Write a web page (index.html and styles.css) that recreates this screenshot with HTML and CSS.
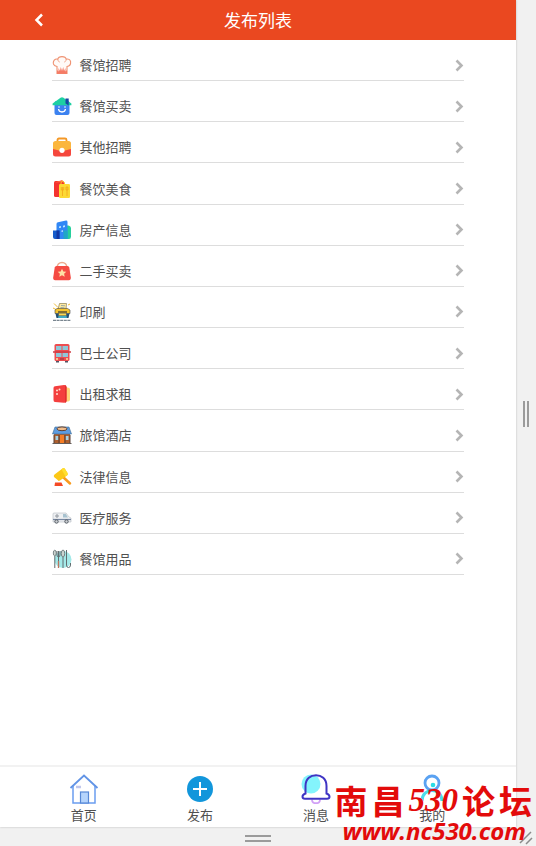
FILE: index.html
```html
<!DOCTYPE html>
<html lang="zh-CN">
<head>
<meta charset="utf-8">
<meta name="viewport" content="width=device-width, initial-scale=1">
<title>发布列表</title>
<link rel="stylesheet" href="styles.css">
</head>
<body>
<div class="stage">
  <div class="phone">
    <header class="topbar">
      <button class="back" type="button" aria-label="返回"><svg width="10" height="14" viewBox="0 0 10 14"><path d="M8 1.500 2.500 7 8 12.500" fill="none" stroke="#fff" stroke-width="2.500"/></svg></button>
      <h1>发布列表</h1>
    </header>
    <main class="content">
      <ul class="list">
        <li><a href="#"><svg class="icon" viewBox="0 0 20 20"><path d="M5 18.500V11.500C1.500 11 .8 8.500 1.500 6.500 2.300 4.300 4.300 3.600 5.800 4.200 6.500.8 13.500.8 14.200 4.200c2-.8 4 .5 4.400 2.500.3 2.600-1.200 4.400-3.600 4.800v7z" fill="#fffaf7" stroke="#ef9272" stroke-width="1.100"/><path d="M5.800 4.500c.2 1.500 1 2.500 2 2.500M14.200 4.500c-.2 1.500-1 2.500-2 2.500" fill="none" stroke="#ef9272" stroke-width=".8"/><path d="M5 18.700V15l1.500 1.500V13L8 16l.8-4 1.200 4 1.200-4 .8 4 1.500-3v3.500L15 15v3.700z" fill="#f57b66"/></svg><span>餐馆招聘</span><svg class="arrow" viewBox="0 0 9 13"><path d="M1.500 1.500 6.500 6.500l-5 5"/></svg></a></li>
        <li><a href="#"><svg class="icon" viewBox="0 0 20 20"><rect x="2.500" y="5" width="15" height="14" rx="2" fill="#3c82f0"/><path d="M.6 7.500 8.500 1.700q1.500-1 3 0l7.900 5.800v1.700H.6z" fill="#1dd0a2"/><path d="M13.500 2.500h3.200V9.500l-3.200-2z" fill="#1747a5"/><path d="M6.500 13c.5 4 6.500 4 7 0" fill="none" stroke="#fff" stroke-width="1.300"/><circle cx="7" cy="11" r=".8" fill="#fff"/><circle cx="13" cy="11" r=".8" fill="#fff"/></svg><span>餐馆买卖</span><svg class="arrow" viewBox="0 0 9 13"><path d="M1.500 1.500 6.500 6.500l-5 5"/></svg></a></li>
        <li><a href="#"><svg class="icon" viewBox="0 0 20 20"><path d="M5.500 6V3q0-1.500 1.500-1.500h6q1.500 0 1.500 1.500v3" fill="none" stroke="#f49826" stroke-width="1.800"/><rect x="1" y="5" width="18" height="14.500" rx="2.500" fill="#f5473d"/><path d="M1 12V6.500q0-2.500 2.500-2.500h13q2.500 0 2.500 2.500V12l-6 1.500H7z" fill="#fbb63d"/><circle cx="10" cy="13.300" r="2.600" fill="#fff"/></svg><span>其他招聘</span><svg class="arrow" viewBox="0 0 9 13"><path d="M1.500 1.500 6.500 6.500l-5 5"/></svg></a></li>
        <li><a href="#"><svg class="icon" viewBox="0 0 20 20"><rect x="2" y="2" width="10" height="16" rx="1.500" fill="#f4332f"/><path d="M3 3.500 10 1l2 2" fill="#ff7142"/><rect x="7" y="5" width="11" height="14" rx="1.200" fill="#fcd934"/><path d="M9 5V3.500q1.500-2.500 3.500 0V5" fill="none" stroke="#fcc425"/><path d="M10.500 8v9M9.300 8v3h2.400V8M15 8v9m-1-9h2v3h-2z" fill="none" stroke="#f2a719" stroke-width=".8"/></svg><span>餐饮美食</span><svg class="arrow" viewBox="0 0 9 13"><path d="M1.500 1.500 6.500 6.500l-5 5"/></svg></a></li>
        <li><a href="#"><svg class="icon" viewBox="0 0 20 20"><path d="M11 5.500h5.500Q19 6 19 8v8.500q0 2.500-2 2.500h-6z" fill="#26cf9c"/><path d="M4.500 4q0-1.500 1.500-1.800l8-1.600Q15.500.5 15.500 2v17h-11z" fill="#3187f5"/><path d="M1 10.500h6.500V19h-4.500q-2 0-2-2z" fill="#165dcb"/><path d="M4.500 10.500h3V19h-3z" fill="#1238a4"/><path d="M11.500 10.500h4V19h-4z" fill="#20a7c5"/><path d="M7 6.500 9 6v1.700l-2 .4zM11 5.700l2-.4V7l-2 .4zM9.500 10.500l1.500-.3v1.500l-1.500.3z" fill="#bfe5ff"/></svg><span>房产信息</span><svg class="arrow" viewBox="0 0 9 13"><path d="M1.500 1.500 6.500 6.500l-5 5"/></svg></a></li>
        <li><a href="#"><svg class="icon" viewBox="0 0 20 20"><path d="M5 7c0-7.500 10-7.500 10 0" fill="none" stroke="#edaa8d" stroke-width="1.500"/><path d="M4.500 5h11q1.500 0 1.800 1.500l1.500 10q.2 2.800-2 2.800H3.200Q1 19.300 1.200 16.500l1.500-10Q3 5 4.500 5z" fill="#f54b43"/><path d="m10 7.700 1.300 2.700 3 .4-2.200 2 .6 3-2.700-1.500-2.700 1.500.6-3-2.200-2 3-.4z" fill="#ffe0a5"/></svg><span>二手买卖</span><svg class="arrow" viewBox="0 0 9 13"><path d="M1.500 1.500 6.500 6.500l-5 5"/></svg></a></li>
        <li><a href="#"><svg class="icon" viewBox="0 0 20 20"><path d="m2 1.500 4 4M1 6l3 1.500M16 3l2-1" stroke="#f0bd37"/><path d="M7.500 1.500h7l-.5 6H6z" fill="#ffe9a0" stroke="#8b8050" stroke-width=".7"/><path d="m9 3.500 4 .3M8.500 5.500l4 .3" stroke="#6f91a5" stroke-width=".7"/><path d="m3 8 2-1.500h10.500L18 8v3.500H3z" fill="#f6c52f" stroke="#444" stroke-width=".6"/><path d="M3.500 11.500h14l-1 4.500h-12z" fill="#254f70"/><path d="M6 10h9" stroke="#333" stroke-width="1.200"/><path d="M7 11.500h7l.5 2h-8z" fill="#ffd84d"/><path d="M6.500 14h8l.5 2H6z" fill="#41a9c2"/><path d="M1 18.300h18" stroke="#596875" stroke-dasharray="3 .6"/></svg><span>印刷</span><svg class="arrow" viewBox="0 0 9 13"><path d="M1.500 1.500 6.500 6.500l-5 5"/></svg></a></li>
        <li><a href="#"><svg class="icon" viewBox="0 0 20 20"><path d="M4 17h3v2.500H4zm9 0h3v2.500h-3z" fill="#515363"/><rect x="2.500" y="1" width="15" height="17" rx="1.500" fill="#ed4d50"/><path d="M1 9h18" stroke="#ce3d43" stroke-width="1.500"/><path d="M4 3h5.500v4H4zm6.500 0H16v4h-5.500zM4 10h5.500v4H4zm6.500 0H16v4h-5.500z" fill="#8fc7d8"/><path d="M4 16h2m8 0h2" stroke="#ffe39b" stroke-width="1.500"/><path d="M8 16h4" stroke="#863a44"/></svg><span>巴士公司</span><svg class="arrow" viewBox="0 0 9 13"><path d="M1.500 1.500 6.500 6.500l-5 5"/></svg></a></li>
        <li><a href="#"><svg class="icon" viewBox="0 0 20 20"><path d="M12 3.500h3.500q2.500 0 2.500 2v10q0 2-2 2h-4z" fill="#ffd579"/><path d="M1.500 4q0-1.500 1.500-1.700l9-1.200q2.500-.2 2.500 2V17q0 2-2.500 1.800L3 18q-1.500-.2-1.500-2z" fill="#f43f3e"/><path d="M13 1.200q1.500.2 1.500 2V17q0 1.600-1.500 1.800z" fill="#df302f"/><circle cx="5" cy="6.500" r="1" fill="#ffe3d0"/><circle cx="7.500" cy="5.500" r="1" fill="#ffe3d0"/><circle cx="5" cy="10" r="1" fill="#ffe3d0"/></svg><span>出租求租</span><svg class="arrow" viewBox="0 0 9 13"><path d="M1.500 1.500 6.500 6.500l-5 5"/></svg></a></li>
        <li><a href="#"><svg class="icon" viewBox="0 0 20 20"><path d="M2 8h16v10H2z" fill="#ad602f"/><path d="M3 2h14l2.500 7H.5z" fill="#5d9ce0" stroke="#416b91" stroke-width=".6"/><ellipse cx="10" cy="3.800" rx="5" ry="1.900" fill="#f0bd8c" stroke="#5d4033"/><path d="M3.500 11h3v4h-3zm10 0h3v4h-3z" fill="#a7d2e3"/><path d="M8 10h4v8H8z" fill="#f57d25"/><path d="M7 10v8m6-8v8M2 10v8m16-8v8" stroke="#583d32"/><path d="M.5 18.500h19" stroke="#655d59"/></svg><span>旅馆酒店</span><svg class="arrow" viewBox="0 0 9 13"><path d="M1.500 1.500 6.500 6.500l-5 5"/></svg></a></li>
        <li><a href="#"><svg class="icon" viewBox="0 0 20 20"><path d="m11 10 7 6.500" stroke="#f99b1e" stroke-width="2.500" stroke-linecap="round"/><path d="m2.500 7.500 8-6q1.500-1 2.500.5l2.500 4q.7 1.500-.5 2.500l-7 5q-1.500 1-2.300-.5L2 10Q1.300 8.500 2.500 7.500z" fill="#fcc817"/><path d="m9.500 2.200 1-.7q1.500-1 2.500.5l2.500 4q.7 1.500-.5 2.500l-1.500 1z" fill="#ffdf2e"/><path d="M3 15.500h6.500l1.500 3.500H2.500z" fill="#f44a25"/></svg><span>法律信息</span><svg class="arrow" viewBox="0 0 9 13"><path d="M1.500 1.500 6.500 6.500l-5 5"/></svg></a></li>
        <li><a href="#"><svg class="icon" viewBox="0 0 20 20"><path d="M1 6q0-1 1-1h12l3 4 2 1v4H1z" fill="#eef0f2" stroke="#b4babf" stroke-width=".6"/><path d="M11 6h2.800L16 9.500h-5z" fill="#a7c2cf"/><path d="M1 11.500h18" stroke="#7788a2" stroke-width="1.200"/><path d="M5 6v4M3 8h4" stroke="#9298a0"/><circle cx="4.500" cy="13.500" r="1.700" fill="#ccd0d4" stroke="#555b63"/><circle cx="14.500" cy="13.500" r="1.700" fill="#ccd0d4" stroke="#555b63"/></svg><span>医疗服务</span><svg class="arrow" viewBox="0 0 9 13"><path d="M1.500 1.500 6.500 6.500l-5 5"/></svg></a></li>
        <li><a href="#"><svg class="icon" viewBox="0 0 20 20"><circle cx="11" cy="10.500" r="8.500" fill="#a4e9e8"/><ellipse cx="2.800" cy="4" rx="1.500" ry="2.800" fill="#cbd5d1" stroke="#616d70" stroke-width=".8"/><path d="M2.800 7v12M5 2v4q0 2 1.500 2T8 6V2M6.500 2v17M14.500 1v15q0 2.500 2 2.500t2-2.500v-2" fill="none" stroke="#616d70"/><ellipse cx="11" cy="4.500" rx="1.700" ry="3.500" fill="#cbd5d1" stroke="#616d70" stroke-width=".8"/><path d="M11 8v11" stroke="#616d70"/><path d="M6.500 12v7" stroke="#bc7660" stroke-width="1.300"/></svg><span>餐馆用品</span><svg class="arrow" viewBox="0 0 9 13"><path d="M1.500 1.500 6.500 6.500l-5 5"/></svg></a></li>
      </ul>
    </main>
    <nav class="tabs">
      <a href="#"><svg viewBox="0 0 30 30"><path d="M4 11v18h22V11" fill="#fff" stroke="#6b9df0" stroke-width="1.500"/><path d="M1.500 14 15 1.500 28.500 14" fill="none" stroke="#6294e6" stroke-width="1.800"/><rect x="11.500" y="18" width="8" height="11" fill="#b5d4fc" stroke="#5788d6" stroke-width="1.200"/><path d="M7 13h5" stroke="#c0c7ec" stroke-width="2.500"/></svg><span>首页</span></a>
      <a href="#"><svg viewBox="0 0 30 30"><circle cx="15" cy="15" r="13" fill="#1296db"/><path d="M8 15h14M15 8v14" stroke="#fff" stroke-width="2"/></svg><span>发布</span></a>
      <a href="#"><svg viewBox="0 0 30 30"><circle cx="10" cy="10" r="9.500" fill="#84f4fc"/><path d="M11 25.500c0 5 8 5 8 0" fill="none" stroke="#d1a1f6" stroke-width="1.800"/><path d="M4.500 19.500V12C4.500-2.500 25.500-2.500 25.500 12v7.500q3 1.300 3 3.200t-2.500 2H4q-2.500 0-2.500-2t3-3.200z" fill="none" stroke="#3f35c4" stroke-width="2"/></svg><span>消息</span></a>
      <a href="#"><svg viewBox="0 0 30 30"><path d="M5 27C5 13 25 13 25 27" fill="none" stroke="#4adde9" stroke-width="3"/><circle cx="15" cy="9" r="7" fill="#fff" stroke="#5aa2f2" stroke-width="2.800"/><circle cx="16" cy="11" r="2.300" fill="#2adce5"/></svg><span>我的</span></a>
    </nav>
  </div>
  <div class="handle handle-side"><i></i><i></i></div>
  <div class="handle handle-bottom"><i></i><i></i></div>
  <svg class="corner" viewBox="0 0 14 14"><path d="M1 12 12 1M7 13l6-6" stroke="#8b8b8b" stroke-width="1.500"/></svg>
  <div class="watermark">
    <p class="forum"><span>南</span><span>昌</span><em>530</em><span>论</span><span>坛</span></p>
    <p class="site">www.nc530.com</p>
  </div>
</div>
</body>
</html>
```
FILE: styles.css
```css
* { box-sizing: border-box; }
body {
  margin: 0;
  background: #f1f1f1;
  color: #505050;
  font: 13px/20px "Noto Sans CJK SC", sans-serif;
}
a { color: inherit; text-decoration: none; }
.stage {
  position: relative;
  display: grid;
  grid-template-columns: 1fr 20px;
  grid-template-rows: 1fr 19px;
  min-height: 100vh;
}
.phone {
  display: flex;
  flex-direction: column;
  background: #fff;
  box-shadow: 0 0 2px #bbb;
}
.topbar {
  display: grid;
  grid-template-columns: 78px 1fr 78px;
  align-items: center;
  height: 40px;
  background: #ea4820;
  color: #fff;
}
.topbar h1 {
  margin: 0;
  font-size: 17px;
  font-weight: 400;
  text-align: center;
}
.back {
  display: flex;
  justify-content: center;
  padding: 0;
  border: 0;
  background: none;
}
.content { flex: 1; padding: 0 10%; }
.list {
  display: grid;
  grid-auto-rows: 1fr;
  min-height: 535px;
  margin: 0;
  padding: 0;
  list-style: none;
}
.list li { display: grid; border-bottom: 1px solid #ddd; }
.list a {
  display: flex;
  align-items: center;
  gap: 8px;
  padding-top: 10px;
}
.icon { width: 20px; height: 20px; }
.arrow {
  width: 9px;
  height: 13px;
  margin-left: auto;
  fill: none;
  stroke: #b5b5b5;
  stroke-width: 2.6;
}
.tabs {
  display: grid;
  grid-template-columns: repeat(4, 1fr);
  padding: 7px 5% 0;
  height: 62px;
  border-top: 2px solid #f2f2f2;
}
.tabs a {
  display: flex;
  flex-direction: column;
  align-items: center;
}
.tabs svg { width: 30px; height: 30px; }
.tabs span { margin-top: 1px; }
.handle { display: flex; align-items: center; justify-content: center; gap: 2px; }
.handle i { background: #9b9b9b; }
.handle-side i { width: 2px; height: 26px; }
.handle-bottom { flex-direction: column; gap: 3px; padding-top: 3px; }
.handle-bottom i { width: 26px; height: 2px; }
.corner {
  position: absolute;
  right: 3px;
  bottom: 1px;
  width: 14px;
  height: 14px;
}
.watermark {
  position: absolute;
  right: 4px;
  bottom: 0;
  color: #e30b0b;
  font-weight: 700;
  white-space: nowrap;
  pointer-events: none;
}
.watermark p { margin: 0; }
.forum {
  display: flex;
  gap: 4px;
  font-size: 33px;
  line-height: 32px;
}
.forum em { font-family: "Liberation Serif", serif; font-size: 33px; }
.site {
  padding-right: 6px;
  text-align: right;
  font: italic 700 24px/30px "Open Sans", sans-serif;
}
```
